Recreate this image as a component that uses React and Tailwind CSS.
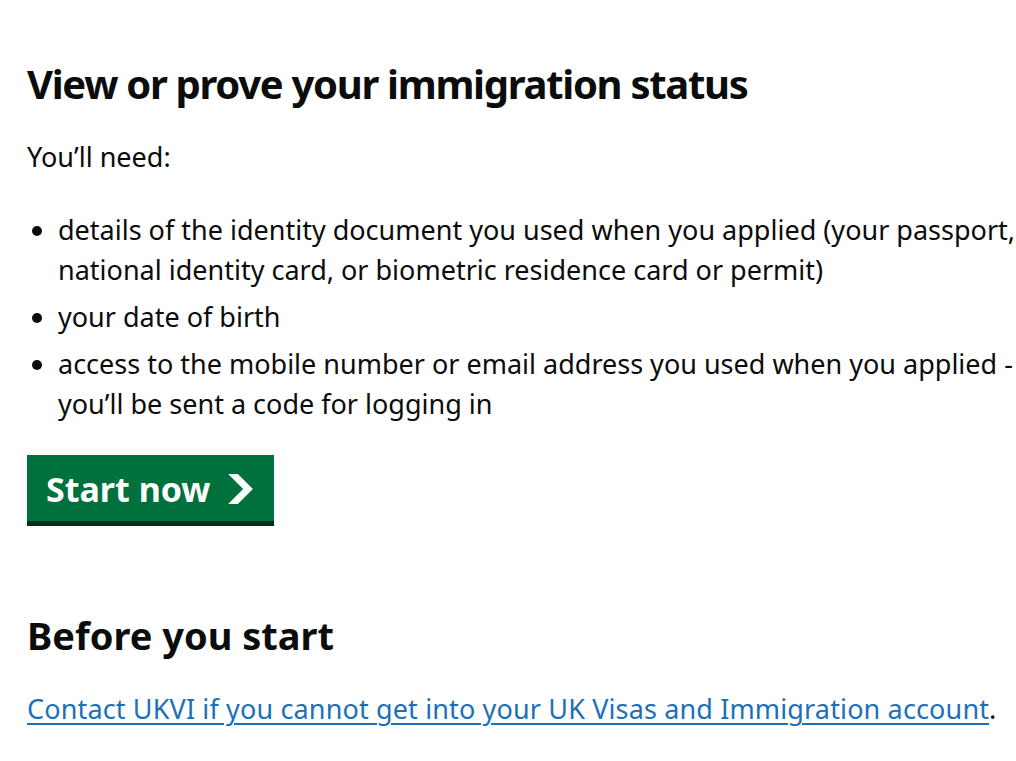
const Chevron = () => (
  <svg
    className="ml-[18px] w-[25px] h-[30px]"
    viewBox="0 0 33 40"
    aria-hidden="true"
    focusable="false"
  >
    <path fill="currentColor" d="M0 0h13l20 20-20 20H0l20-20z" />
  </svg>
);

const items = [
  [
    "details of the identity document you used when you applied (your passport,",
    "national identity card, or biometric residence card or permit)",
  ],
  ["your date of birth"],
  [
    "access to the mobile number or email address you used when you applied -",
    "you\u2019ll be sent a code for logging in",
  ],
];

export default function App() {
  return (
    <div className="w-[1016px] h-[761px] overflow-hidden bg-white text-[#0b0c0c] font-['Noto_Sans',sans-serif]">
      <main className="pl-[27px] pt-[58px]">
        {/* Heading */}
        <h1 className="text-[40px] leading-[52px] font-bold tracking-[-1.3px] mb-[27px]">
          View or prove your immigration status
        </h1>

        <p className="text-[27px] leading-[40px] mb-[33px]">You&rsquo;ll need:</p>

        {/* Requirements list */}
        <ul className="text-[27px] leading-[40px] mb-[31px] pl-[31px] list-disc whitespace-nowrap">
          {items.map((lines, i) => (
            <li key={i} className="mb-[7px]">
              {lines.map((line, j) => (
                <span key={j} className="block">
                  {line}
                </span>
              ))}
            </li>
          ))}
        </ul>

        {/* Start button */}
        <button
          type="button"
          className="flex items-center bg-[#00703c] text-white text-[34px] leading-[40px] font-bold pl-[19px] pr-[21px] pt-[14px] pb-[12px] shadow-[0_5px_0_#002d18] mb-[90px]"
        >
          Start now
          <Chevron />
        </button>

        <h2 className="text-[38px] leading-[48px] font-bold tracking-[0px] mb-[30px]">
          Before you start
        </h2>

        <p className="text-[27px] leading-[40px]">
          <a
            href="#"
            className="text-[#1d70b8] underline underline-offset-[4px] decoration-[1.5px] tracking-[0.14px]"
          >
            Contact UKVI if you cannot get into your UK Visas and Immigration
            account
          </a>
          .
        </p>
      </main>
    </div>
  );
}
